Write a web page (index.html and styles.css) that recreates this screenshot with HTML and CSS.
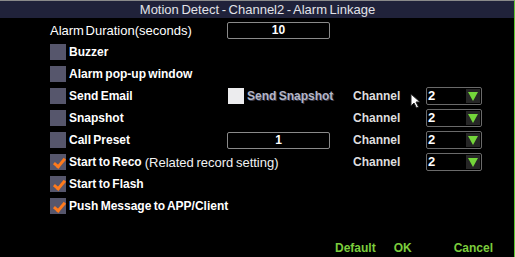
FILE: index.html
```html
<!DOCTYPE html>
<html lang="en">
<head>
  <meta charset="UTF-8">
  <title>Motion Detect - Alarm Linkage</title>
  <link rel="stylesheet" href="styles.css">
</head>
<body>

  <div class="dialog">
    <div class="title">Motion Detect - Channel2 - Alarm Linkage</div>

    <div class="rows">
      <div class="row">
        <span class="label plain">Alarm Duration(seconds)</span>
        <span class="field">10</span>
      </div>

      <div class="row">
        <span class="label"><i class="box"></i>Buzzer</span>
      </div>

      <div class="row">
        <span class="label"><i class="box"></i>Alarm pop-up window</span>
      </div>

      <div class="row">
        <span class="label"><i class="box"></i>Send Email</span>
        <span class="snap"><i class="box light"></i>Send Snapshot</span>
        <span class="chan">Channel</span>
        <span class="select">2<b class="arrow"></b></span>
      </div>

      <div class="row">
        <span class="label"><i class="box"></i>Snapshot</span>
        <span></span>
        <span class="chan">Channel</span>
        <span class="select">2<b class="arrow"></b></span>
      </div>

      <div class="row">
        <span class="label"><i class="box"></i>Call Preset</span>
        <span class="field">1</span>
        <span class="chan">Channel</span>
        <span class="select">2<b class="arrow"></b></span>
      </div>

      <div class="row">
        <span class="label wide"><i class="box checked"></i>Start to Reco<em class="note">(Related record setting)</em></span>
        <span class="chan">Channel</span>
        <span class="select">2<b class="arrow"></b></span>
      </div>

      <div class="row">
        <span class="label wide"><i class="box checked"></i>Start to Flash</span>
      </div>

      <div class="row">
        <span class="label wide"><i class="box checked"></i>Push Message to APP/Client</span>
      </div>
    </div>

    <div class="buttons">
      <span class="btn">Default</span>
      <span class="btn">OK</span>
      <span class="btn cancel">Cancel</span>
    </div>

    <!-- mouse pointer -->
    <svg class="cursor" width="11" height="16" viewBox="0 0 11 16">
      <path d="M1 1 L1 13 L4 10 L6.5 15 L8.5 14 L6 9 L10 9 Z" fill="#fff" stroke="#222" stroke-width="1"/>
    </svg>
  </div>

</body>
</html>
```

FILE: styles.css
```css
/* Page */
body {
  margin: 0;
  background: #000;
  font-family: 'Liberation Sans', Arial, sans-serif;
  font-weight: bold;
  font-size: 12px;
  color: #fff;
}

/* Dialog frame */
.dialog {
  position: relative;
  width: 514px;
  height: 256px;
  border-top: 1px solid #8a8a8a;
  border-right: 1px solid #5fc532;
  display: flex;
  flex-direction: column;
}

.title {
  height: 17px;
  line-height: 17px;
  background: #20223a;
  color: #e2e2e8;
  text-align: center;
  font-weight: normal;
  font-size: 13px;
  word-spacing: -1px;
  padding-left: 1px;
}

/* Setting rows */
.rows {
  padding: 1px 0 0 50px;
}

.row {
  height: 22px;
  display: grid;
  grid-template-columns: 177px 126px 73px 56px;
  align-items: center;
}

.label {
  display: flex;
  align-items: center;
  word-spacing: -1px;
  white-space: nowrap;
}

.label.plain {
  font-weight: normal;
  font-size: 13px;
  word-spacing: -2px;
}

.label.wide {
  grid-column: span 2;
}

.note {
  font-style: normal;
  font-weight: normal;
  font-size: 13px;
  margin-left: 3px;
  color: #f2f2f2;
}

.box {
  width: 16px;
  height: 16px;
  background: #56566c;
  margin-right: 3px;
  position: relative;
}

.box.light {
  background: #ececee;
}

.box.checked::after {
  content: "";
  position: absolute;
  left: 6px;
  top: 2px;
  width: 4px;
  height: 9px;
  border-right: 3px solid #ff7a1c;
  border-bottom: 3px solid #ff7a1c;
  transform: rotate(40deg);
}

.field {
  width: 101px;
  height: 15px;
  border: 1px solid #8a8a8a;
  border-radius: 2px;
  text-align: center;
  line-height: 15px;
}

.snap {
  display: flex;
  align-items: center;
  color: #b3b6c6;
  text-shadow: 1px 1px 0 #3c3c4c;
  padding-left: 1px;
  word-spacing: -1px;
}

.chan {
  color: #dedede;
}

.select {
  position: relative;
  width: 53px;
  height: 16px;
  border: 1px solid #6a6a6a;
  border-radius: 2px;
  line-height: 16px;
  padding-left: 1px;
  font-size: 13px;
}

.arrow {
  position: absolute;
  right: 1px;
  top: 1px;
  width: 14px;
  height: 14px;
  background: #262626;
}

.arrow::after {
  content: "";
  position: absolute;
  left: 2px;
  top: 3px;
  border-left: 5px solid transparent;
  border-right: 5px solid transparent;
  border-top: 9px solid #74d63a;
}

/* Bottom buttons */
.buttons {
  margin-top: auto;
  height: 18px;
  line-height: 18px;
  display: flex;
  padding-left: 335px;
  color: #7ccd3c;
}

.btn {
  margin-right: 18px;
}

.btn.cancel {
  margin-left: 24px;
}

.cursor {
  position: absolute;
  left: 410px;
  top: 92px;
}
```
